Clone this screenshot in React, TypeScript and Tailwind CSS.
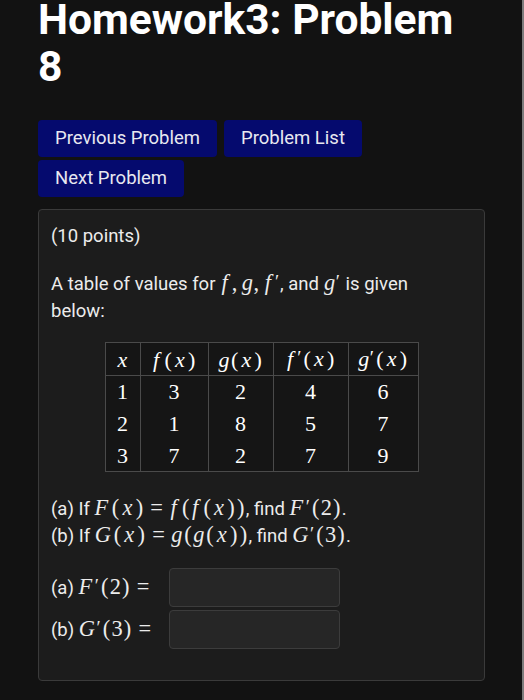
import type { ReactNode } from 'react'

const ROWS = [
  [1, 3, 2, 4, 6],
  [2, 1, 8, 5, 7],
  [3, 7, 2, 7, 9],
]

const COLS = ['w-[35px]', 'w-[68px]', 'w-[65px]', 'w-[75px]', 'w-[70px]']

// spacing that brings Times italic closer to the TeX math italic widths
const PAD: Record<string, string> = {
  f: 'pl-[1.5px] pr-[4px]',
  g: 'px-[0.5px]',
  x: 'px-[2px]',
  F: 'pr-[2.5px]',
  G: 'pr-[1.5px]',
}

function M({ children }: { children: ReactNode }) {
  return <span className="font-['Liberation_Serif',serif] text-[22.4px] whitespace-nowrap">{children}</span>
}

function V({ c }: { c: string }) {
  return <i className={`italic ${PAD[c]}`}>{c}</i>
}

function P({ c }: { c: string }) {
  return <span className="px-[1.2px]">{c}</span>
}

function Eq() {
  return <span className="mx-[6px]">=</span>
}

function Cm() {
  return <span className="mr-[4px]">,</span>
}

function Pr() {
  return <span className="relative -top-[2px] pr-[1px] text-[19px]">′</span>
}

const HEADS: ReactNode[] = [
  <V c="x" />,
  <><V c="f" /><P c="(" /><V c="x" /><P c=")" /></>,
  <><V c="g" /><P c="(" /><V c="x" /><P c=")" /></>,
  <><V c="f" /><Pr /><P c="(" /><V c="x" /><P c=")" /></>,
  <><V c="g" /><Pr /><P c="(" /><V c="x" /><P c=")" /></>,
]

export default function App() {
  return (
    <main className="min-h-[700px] border-r-2 border-[#7c7c7c] bg-[#121212] pl-[38px] pr-[37px] text-white font-['Roboto',sans-serif] overflow-hidden">
      {/* Title */}
      <h1 className="-mt-[4px] w-[440px] text-[42.5px] font-bold leading-[47px] text-white">Homework3: Problem 8</h1>

      {/* Navigation */}
      <div className="mt-[30px] flex flex-wrap gap-x-[7px] gap-y-[3px]">
        <button className="h-[37px] rounded-[4px] bg-[#050a6e] px-[17px] text-[18.5px] text-[#e8e8f0]">Previous Problem</button>
        <button className="h-[37px] rounded-[4px] bg-[#050a6e] px-[17px] text-[18.5px] text-[#e8e8f0]">Problem List</button>
        <button className="h-[37px] rounded-[4px] bg-[#050a6e] px-[17px] text-[18.5px] text-[#e8e8f0]">Next Problem</button>
      </div>

      {/* Problem card */}
      <div className="mt-[12px] rounded-[4px] border border-[#3a3a3a] bg-[#1c1c1c] px-[12px] pt-[13px] pb-[31px] text-[18.5px] leading-[27px] text-[#ececec]">
        <p>(10 points)</p>
        <p className="mt-[19px] pr-[24px]">
          A table of values for <M><V c="f" /><Cm /><V c="g" /><Cm /><V c="f" /><Pr /></M>, and <M><V c="g" /><Pr /></M> is given below:
        </p>

        <div className="mt-[17px] flex justify-center">
          <table className="border-collapse border border-[#4a4a4a] bg-[#151515] font-['Liberation_Serif',serif] text-[22px] text-white">
            <thead>
              <tr className="h-[33px]">
                {HEADS.map((h, i) => (
                  <th key={i} className={`${COLS[i]} border border-[#4a4a4a] p-0 text-center font-normal whitespace-nowrap`}>{h}</th>
                ))}
              </tr>
            </thead>
            <tbody>
              {ROWS.map((r, ri) => (
                <tr key={ri} className="h-[32px]">
                  {r.map((v, i) => (
                    <td key={i} className="border-x border-[#4a4a4a] p-0 text-center">{v}</td>
                  ))}
                </tr>
              ))}
            </tbody>
          </table>
        </div>

        <div className="mt-[23px] leading-[26px]">
          <p>
            (a) If <M><V c="F" /><P c="(" /><V c="x" /><P c=")" /><Eq /><V c="f" /><P c="(" /><V c="f" /><P c="(" /><V c="x" /><P c=")" /><P c=")" /></M>, find <M><V c="F" /><Pr /><P c="(" />2<P c=")" /></M>.
          </p>
          <p>
            (b) If <M><V c="G" /><P c="(" /><V c="x" /><P c=")" /><Eq /><V c="g" /><P c="(" /><V c="g" /><P c="(" /><V c="x" /><P c=")" /><P c=")" /></M>, find <M><V c="G" /><Pr /><P c="(" />3<P c=")" /></M>.
          </p>
        </div>

        <div className="mt-[19px] flex flex-col gap-[3px]">
          <div className="flex items-center">
            <span className="w-[118px]">(a) <M><V c="F" /><Pr /><P c="(" />2<P c=")" /><Eq /></M></span>
            <div className="h-[39px] w-[171px] rounded-[4px] border border-[#3c3c3c] bg-[#262626]" />
          </div>
          <div className="flex items-center">
            <span className="w-[118px]">(b) <M><V c="G" /><Pr /><P c="(" />3<P c=")" /><Eq /></M></span>
            <div className="h-[39px] w-[171px] rounded-[4px] border border-[#3c3c3c] bg-[#262626]" />
          </div>
        </div>
      </div>
    </main>
  )
}
